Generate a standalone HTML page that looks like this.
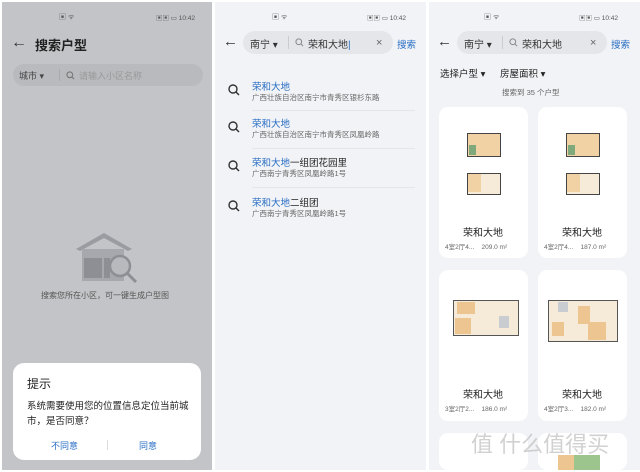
<!DOCTYPE html>
<html style="overflow:hidden;width:640px;height:472px"><head><meta charset="utf-8"><style>
*{margin:0;padding:0;box-sizing:border-box}
body{width:640px;height:472px;background:#fff;position:relative;overflow:hidden;font-family:"Liberation Sans","Noto Sans CJK SC",sans-serif;color:#222}
.p{position:absolute;top:2px;height:468px;overflow:hidden}
.abs{position:absolute}
.pill{position:absolute;border-radius:14px}
.t{position:absolute;white-space:nowrap}
.card{position:absolute;background:#fff;border-radius:9px;width:89px;height:151px}
svg.m{position:absolute}
</style></head><body>

<!-- Panel 1 -->
<div class="p" style="left:2px;width:210px;background:#c3c4c7">
  <div class="t" style="left:57px;top:10px;font-size:7px;color:#555">▣ ᯤ</div>
  <div class="t" style="left:154px;top:10px;font-size:6.5px;color:#555">▣▣ ▭ 10:42</div>
  <div class="t" style="left:9px;top:32px;font-size:16px;color:#333">←</div>
  <div class="t" style="left:33px;top:33px;font-size:13px;font-weight:bold;color:#222">搜索户型</div>
  <div class="pill" style="left:11px;top:62px;width:190px;height:22px;background:#b9babe"></div>
  <div class="t" style="left:17px;top:67px;font-size:9px;color:#444">城市 ▾</div>
  <div class="abs" style="left:57px;top:67px;width:1px;height:12px;background:#aaa"></div>
  <svg class="m" style="left:64px;top:69px" width="9" height="9" viewBox="0 0 10 10"><circle cx="4.2" cy="4.2" r="3.2" fill="none" stroke="#777" stroke-width="1.2"/><line x1="6.6" y1="6.6" x2="9" y2="9" stroke="#777" stroke-width="1.2"/></svg>
  <div class="t" style="left:77px;top:67px;font-size:9px;color:#999">请输入小区名称</div>
  <svg class="abs" style="left:72px;top:229px" width="70" height="55" viewBox="0 0 70 55">
    <path d="M2 18 L30 2 L58 18 L54 20 L30 7 L6 20Z" fill="#9a9ca1"/>
    <rect x="8" y="18" width="42" height="32" fill="#a6a8ad"/>
    <rect x="10" y="27" width="18" height="20" fill="#8d8f94"/>
    <rect x="30" y="27" width="6" height="20" fill="#8d8f94"/>
    <circle cx="46" cy="35" r="10" fill="#b8b9bd" stroke="#8d8f94" stroke-width="2.5"/>
    <line x1="53" y1="42" x2="62" y2="51" stroke="#8d8f94" stroke-width="3"/>
  </svg>
  <div class="t" style="left:39px;top:288px;font-size:8px;color:#555">搜索您所在小区，可一键生成户型图</div>
  <div class="abs" style="left:11px;top:361px;width:188px;height:97px;background:#fff;border-radius:11px"></div>
  <div class="t" style="left:25px;top:373px;font-size:12px;color:#222">提示</div>
  <div class="t" style="left:25px;top:397px;font-size:9.5px;color:#222;line-height:15px">系统需要使用您的位置信息定位当前城<br>市，是否同意？</div>
  <div class="t" style="left:49px;top:437px;font-size:9px;color:#2b6fc4">不同意</div>
  <div class="abs" style="left:105px;top:438px;width:1px;height:10px;background:#ddd"></div>
  <div class="t" style="left:137px;top:437px;font-size:9px;color:#2b6fc4">同意</div>
</div>

<!-- Panel 2 -->
<div class="p" style="left:215px;width:211px;background:#f1f3f6">
  <div class="t" style="left:57px;top:10px;font-size:7px;color:#555">▣ ᯤ</div>
  <div class="t" style="left:152px;top:10px;font-size:6.5px;color:#555">▣▣ ▭ 10:42</div>
  <div class="t" style="left:8px;top:31px;font-size:15px;color:#333">←</div>
  <div class="pill" style="left:28px;top:29px;width:150px;height:23px;background:#e4e6ea"></div>
  <div class="t" style="left:35px;top:34px;font-size:10px;color:#333">南宁 ▾</div>
  <div class="abs" style="left:73px;top:34px;width:1px;height:13px;background:#ccc"></div>
  <svg class="m" style="left:80px;top:36px" width="9" height="9" viewBox="0 0 10 10"><circle cx="4.2" cy="4.2" r="3.2" fill="none" stroke="#888" stroke-width="1.1"/><line x1="6.6" y1="6.6" x2="9" y2="9" stroke="#888" stroke-width="1.1"/></svg>
  <div class="t" style="left:93px;top:34px;font-size:10px;color:#333">荣和大地<span style="color:#2b6fc4">|</span></div>
  <div class="t" style="left:161px;top:35px;font-size:11px;color:#666">×</div>
  <div class="t" style="left:182px;top:35px;font-size:9.5px;color:#2b6fc4">搜索</div>
  <svg class="m" style="left:13px;top:82px" width="12" height="12" viewBox="0 0 12 12"><circle cx="5" cy="5" r="4" fill="none" stroke="#333" stroke-width="1.4"/><line x1="8" y1="8" x2="11" y2="11" stroke="#333" stroke-width="1.5"/></svg>
  <div class="t" style="left:37px;top:77px;font-size:9.5px;color:#2b6fc4">荣和大地</div>
  <div class="t" style="left:37px;top:90px;font-size:7.5px;color:#666">广西壮族自治区南宁市青秀区银杉东路</div>
  <div class="abs" style="left:37px;top:108px;width:163px;height:1px;background:#e3e5e8"></div>
  <svg class="m" style="left:13px;top:119px" width="12" height="12" viewBox="0 0 12 12"><circle cx="5" cy="5" r="4" fill="none" stroke="#333" stroke-width="1.4"/><line x1="8" y1="8" x2="11" y2="11" stroke="#333" stroke-width="1.5"/></svg>
  <div class="t" style="left:37px;top:114px;font-size:9.5px;color:#2b6fc4">荣和大地</div>
  <div class="t" style="left:37px;top:127px;font-size:7.5px;color:#666">广西壮族自治区南宁市青秀区凤凰岭路</div>
  <div class="abs" style="left:37px;top:146px;width:163px;height:1px;background:#e3e5e8"></div>
  <svg class="m" style="left:13px;top:158px" width="12" height="12" viewBox="0 0 12 12"><circle cx="5" cy="5" r="4" fill="none" stroke="#333" stroke-width="1.4"/><line x1="8" y1="8" x2="11" y2="11" stroke="#333" stroke-width="1.5"/></svg>
  <div class="t" style="left:37px;top:153px;font-size:9.5px;color:#222"><span style="color:#2b6fc4">荣和大地</span>一组团花园里</div>
  <div class="t" style="left:37px;top:166px;font-size:7.5px;color:#666">广西南宁青秀区凤凰岭路1号</div>
  <div class="abs" style="left:37px;top:185px;width:163px;height:1px;background:#e3e5e8"></div>
  <svg class="m" style="left:13px;top:198px" width="12" height="12" viewBox="0 0 12 12"><circle cx="5" cy="5" r="4" fill="none" stroke="#333" stroke-width="1.4"/><line x1="8" y1="8" x2="11" y2="11" stroke="#333" stroke-width="1.5"/></svg>
  <div class="t" style="left:37px;top:193px;font-size:9.5px;color:#222"><span style="color:#2b6fc4">荣和大地</span>二组团</div>
  <div class="t" style="left:37px;top:206px;font-size:7.5px;color:#666">广西南宁青秀区凤凰岭路1号</div>
</div>

<!-- Panel 3 -->
<div class="p" style="left:429px;width:211px;background:#f1f3f6">
  <div class="t" style="left:55px;top:10px;font-size:7px;color:#555">▣ ᯤ</div>
  <div class="t" style="left:150px;top:10px;font-size:6.5px;color:#555">▣▣ ▭ 10:42</div>
  <div class="t" style="left:8px;top:31px;font-size:15px;color:#333">←</div>
  <div class="pill" style="left:28px;top:29px;width:150px;height:23px;background:#e4e6ea"></div>
  <div class="t" style="left:35px;top:34px;font-size:10px;color:#333">南宁 ▾</div>
  <div class="abs" style="left:73px;top:34px;width:1px;height:13px;background:#ccc"></div>
  <svg class="m" style="left:80px;top:36px" width="9" height="9" viewBox="0 0 10 10"><circle cx="4.2" cy="4.2" r="3.2" fill="none" stroke="#888" stroke-width="1.1"/><line x1="6.6" y1="6.6" x2="9" y2="9" stroke="#888" stroke-width="1.1"/></svg>
  <div class="t" style="left:93px;top:34px;font-size:10px;color:#333">荣和大地</div>
  <div class="t" style="left:161px;top:35px;font-size:11px;color:#666">×</div>
  <div class="t" style="left:182px;top:35px;font-size:9.5px;color:#2b6fc4">搜索</div>
  <div class="t" style="left:11px;top:64px;font-size:9.5px;color:#222">选择户型 ▾</div>
  <div class="t" style="left:71px;top:64px;font-size:9.5px;color:#222">房屋面积 ▾</div>
  <div class="t" style="left:73px;top:85px;font-size:7.5px;color:#666">搜索到 35 个户型</div>

  <div class="card" style="left:10px;top:105px">
    <div class="abs" style="left:28px;top:26px;width:34px;height:24px;background:#f0d2a4;border:1px solid #444"></div>
    <div class="abs" style="left:30px;top:38px;width:7px;height:10px;background:#7fa97a"></div>
    <div class="abs" style="left:28px;top:66px;width:34px;height:22px;background:#f6ebd8;border:1px solid #444"></div>
    <div class="abs" style="left:29px;top:67px;width:13px;height:18px;background:#f0d2a4"></div>
    <div class="t" style="left:24px;top:117px;font-size:10px">荣和大地</div>
    <div class="t" style="left:6px;top:134px;font-size:6.5px;color:#666">4室2厅4...&nbsp;&nbsp;&nbsp;&nbsp;209.0 m²</div>
  </div>
  <div class="card" style="left:109px;top:105px">
    <div class="abs" style="left:28px;top:26px;width:34px;height:24px;background:#f0d2a4;border:1px solid #444"></div>
    <div class="abs" style="left:30px;top:38px;width:7px;height:10px;background:#7fa97a"></div>
    <div class="abs" style="left:28px;top:66px;width:34px;height:22px;background:#f6ebd8;border:1px solid #444"></div>
    <div class="abs" style="left:29px;top:67px;width:13px;height:18px;background:#f0d2a4"></div>
    <div class="t" style="left:24px;top:117px;font-size:10px">荣和大地</div>
    <div class="t" style="left:6px;top:134px;font-size:6.5px;color:#666">4室2厅4...&nbsp;&nbsp;&nbsp;&nbsp;187.0 m²</div>
  </div>
  <div class="card" style="left:10px;top:268px">
    <div class="abs" style="left:14px;top:30px;width:66px;height:36px;background:#f6ebd8;border:1px solid #555"></div>
    <div class="abs" style="left:18px;top:32px;width:18px;height:12px;background:#ecc591"></div>
    <div class="abs" style="left:16px;top:48px;width:16px;height:16px;background:#ecc591"></div>
    <div class="abs" style="left:60px;top:46px;width:10px;height:12px;background:#c9ccd0"></div>
    <div class="t" style="left:24px;top:116px;font-size:10px">荣和大地</div>
    <div class="t" style="left:6px;top:133px;font-size:6.5px;color:#666">3室2厅2...&nbsp;&nbsp;&nbsp;&nbsp;186.0 m²</div>
  </div>
  <div class="card" style="left:109px;top:268px">
    <div class="abs" style="left:10px;top:30px;width:70px;height:42px;background:#f6ebd8;border:1px solid #555"></div>
    <div class="abs" style="left:40px;top:36px;width:12px;height:18px;background:#ecc591"></div>
    <div class="abs" style="left:50px;top:52px;width:18px;height:18px;background:#ecc591"></div>
    <div class="abs" style="left:14px;top:52px;width:12px;height:14px;background:#ecc591"></div>
    <div class="abs" style="left:20px;top:32px;width:10px;height:10px;background:#c9ccd0"></div>
    <div class="t" style="left:24px;top:116px;font-size:10px">荣和大地</div>
    <div class="t" style="left:6px;top:133px;font-size:6.5px;color:#666">4室2厅3...&nbsp;&nbsp;&nbsp;&nbsp;182.0 m²</div>
  </div>
  <div class="card" style="left:10px;top:431px;height:37px"></div>
  <div class="card" style="left:109px;top:431px;height:37px">
    <div class="abs" style="left:20px;top:22px;width:16px;height:15px;background:#ecc591"></div>
    <div class="abs" style="left:36px;top:22px;width:26px;height:15px;background:#9cc48d"></div>
  </div>
  <div class="t" style="left:42px;top:430px;font-size:22px;line-height:26px;color:rgba(190,190,190,.7)">值 什么值得买</div>
</div>
</body></html>
